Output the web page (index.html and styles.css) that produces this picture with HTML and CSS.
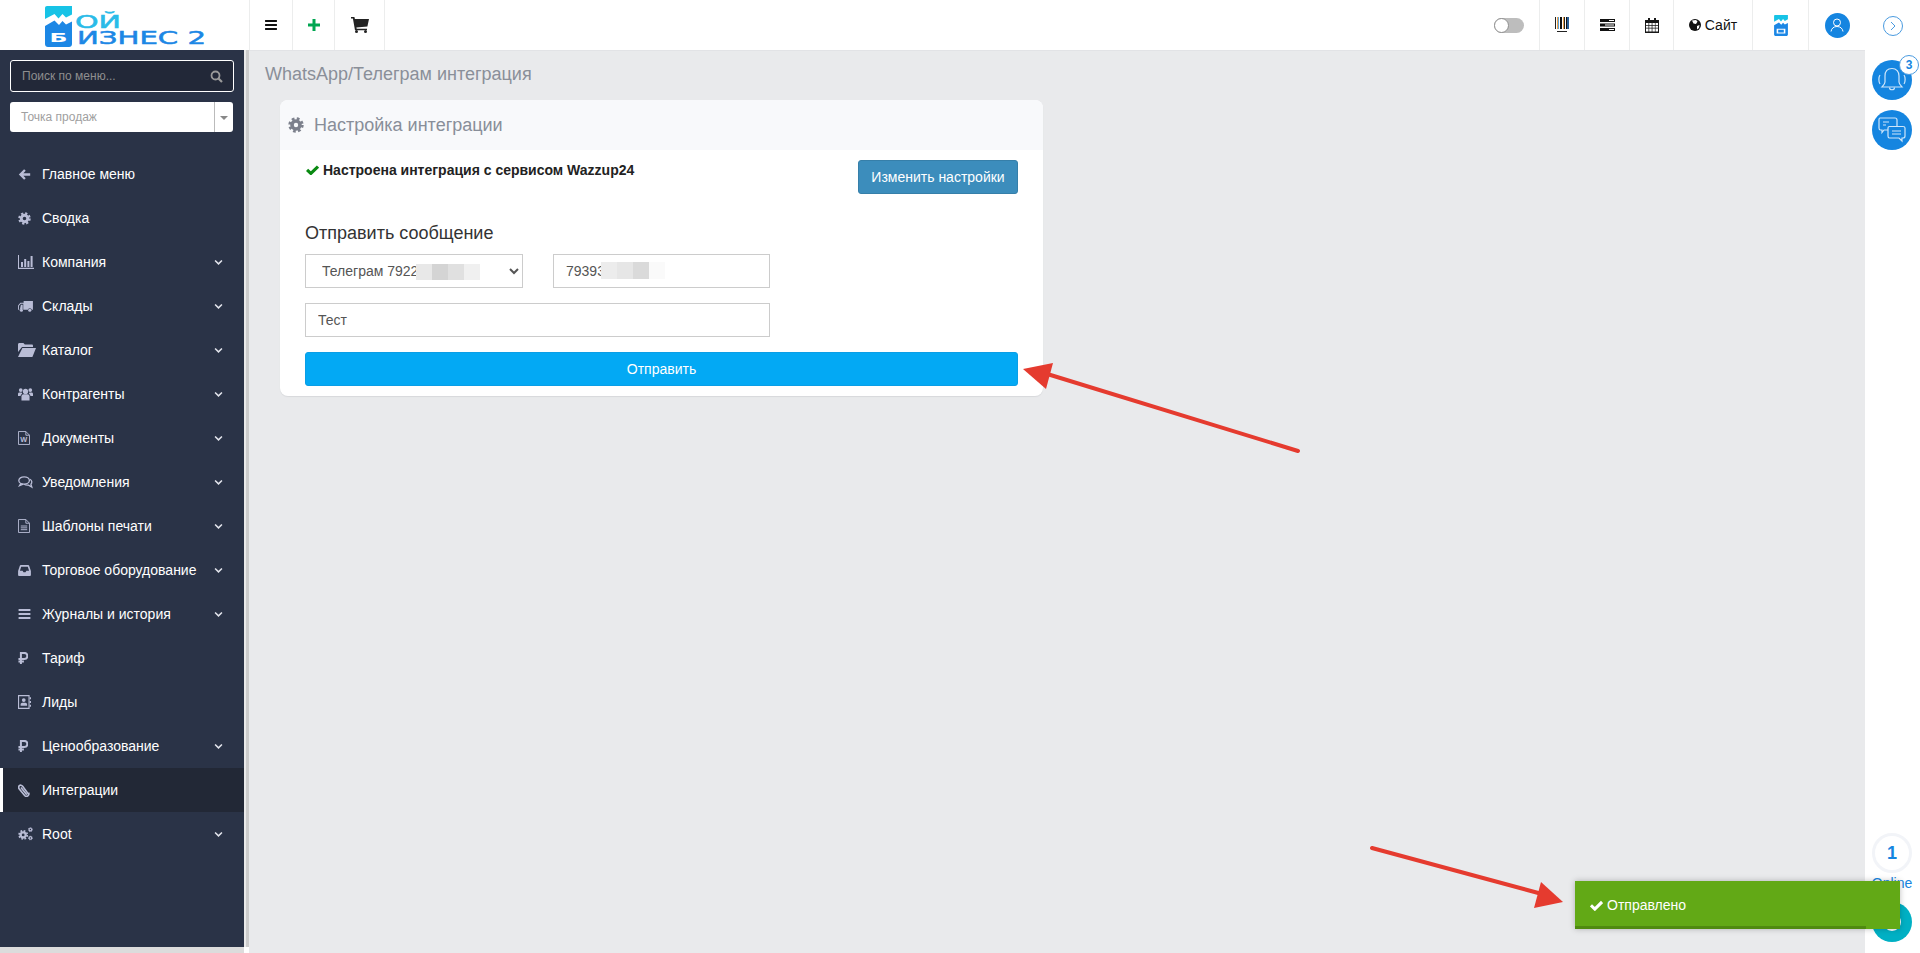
FILE: index.html
```html
<!DOCTYPE html>
<html lang="ru">
<head>
  <meta charset="UTF-8">
  <title>WhatsApp/Телеграм интеграция</title>
  <link rel="stylesheet" href="styles.css">
</head>
<body>
  <svg class="sprite" width="0" height="0">
    <symbol id="i-back" viewBox="0 0 16 16"><path d="M7.500 1.500 1 8l6.500 6.500 2-2L6.600 9.600H15V6.400H6.600l2.900-2.900z"/></symbol>
    <symbol id="i-cog" viewBox="0 0 16 16"><circle cx="8" cy="8" r="4" fill="none" stroke="currentColor" stroke-width="3.600"/><circle cx="8" cy="8" r="6.400" fill="none" stroke="currentColor" stroke-width="2.600" stroke-dasharray="2.700 2.330"/></symbol>
    <symbol id="i-chart" viewBox="0 0 16 14"><path d="M0 0h1v12.800h15V14H0z"/><path d="M3 7h2v5H3zM6.200 4h2v8h-2zM9.400 6h2v6h-2zM12.600 1h2v11h-2z"/></symbol>
    <symbol id="i-truck" viewBox="0 0 16 14"><path d="M6 1h10v9.500h-1.200a2.200 2.200 0 0 0-4.300 0H5.600V4H3L1 6.200V10h.6a2.200 2.200 0 0 0 0 .5H0V6l2.500-3H6z"/><circle cx="3.600" cy="11" r="1.700"/><circle cx="12.600" cy="11" r="1.700"/><path d="M2 10h3V5H3z"/></symbol>
    <symbol id="i-folder" viewBox="0 0 18 14"><path d="M0 1.500C0 .7.600 0 1.400 0h4l1.400 1.600h7c.7 0 1.200.5 1.200 1.200V4H4L0 9z"/><path d="M4.400 5H18l-3.600 9H0z"/></symbol>
    <symbol id="i-users" viewBox="0 0 16 14"><circle cx="8" cy="4.200" r="2.800"/><circle cx="2.900" cy="2.800" r="2"/><circle cx="13.100" cy="2.800" r="2"/><path d="M3.700 14V9.600C3.700 8 5 7.200 6 7.200h4c1 0 2.300.8 2.300 2.400V14z"/><path d="M0 9V7c0-.9.700-1.500 1.500-1.500h2.300l.7 1.100C3.400 7.100 2.800 8 2.800 9zM16 9V7c0-.9-.7-1.500-1.500-1.500h-2.300l-.7 1.100c1.100.5 1.700 1.400 1.700 2.400z"/></symbol>
    <symbol id="i-page" viewBox="0 0 13 15"><path d="M.5.500h8l4 4v10H.5z" fill="none" stroke="currentColor"/><path d="M8.500.500v4h4" fill="none" stroke="currentColor"/></symbol>
    <symbol id="i-comments" viewBox="0 0 16 14"><ellipse cx="6.500" cy="4.800" rx="5.700" ry="3.900" fill="none" stroke="currentColor" stroke-width="1.400"/><path d="M3 8l-1.400 2.400L5.500 8.800M12.800 3.500c2.300 1.300 2.600 3.700 1 5.300l1 3.200-3.600-2.200c-1.500.2-3.300 0-4.700-1" fill="none" stroke="currentColor" stroke-width="1.400"/></symbol>
    <symbol id="i-file" viewBox="0 0 13 15"><path d="M.5.500h8l4 4v10H.5z" fill="none" stroke="currentColor"/><path d="M8.500.500v4h4M3 7.500h7M3 9.500h7M3 11.500h7" fill="none" stroke="currentColor"/></symbol>
    <symbol id="i-inbox" viewBox="0 0 14 12"><path d="M3 0h8c.5 0 .9.300 1.100.7L14 6.500V11c0 .6-.4 1-1 1H1c-.6 0-1-.4-1-1V6.500L1.900.7C2.100.3 2.500 0 3 0zm.4 1.800L2 6.200h2.900l1 1.800h2.200l1-1.800H12l-1.400-4.400z"/></symbol>
    <symbol id="i-bars" viewBox="0 0 13 11"><path d="M0 0h13v2.200H0zM0 4.400h13v2.200H0zM0 8.800h13V11H0z"/></symbol>
    <symbol id="i-rub" viewBox="0 0 11 13"><path d="M3.200 13V.9h3.700a3.400 3.400 0 0 1 0 6.800H.5M.5 10.300h6" fill="none" stroke="currentColor" stroke-width="2.200"/></symbol>
    <symbol id="i-book" viewBox="0 0 14 15"><path d="M.6.600h11.300v13.800H.6z" fill="none" stroke="currentColor" stroke-width="1.200"/><circle cx="6.200" cy="5.400" r="2"/><path d="M2.800 11.500V10c0-1 .8-1.800 1.800-1.800H8c1 0 1.800.8 1.800 1.800v1.500zM12.500 2.500H14v2h-1.500zM12.500 6.500H14v2h-1.500zM12.500 10.500H14v2h-1.500z"/></symbol>
    <symbol id="i-clip" viewBox="0 0 13 14"><path d="M11.500 11.200 5 2.400C4 1 2.400 1 1.500 1.800S.4 4 1.400 5.400l5.800 7c.9 1 2.400 1.200 3.500.4s1.500-2.300.7-3.400" fill="none" stroke="currentColor" stroke-width="1.800"/><path d="M3.200 3.800l6.300 7.900" fill="none" stroke="currentColor" stroke-width="1.800"/></symbol>
    <symbol id="i-cogs" viewBox="0 0 16 15"><use href="#i-cog" x="0" y="3" width="11" height="11"/><use href="#i-cog" x="10.500" y="0" width="5.500" height="5.500"/><use href="#i-cog" x="10.500" y="9" width="5.500" height="5.500"/></symbol>
    <symbol id="i-chevron" viewBox="0 0 10 7"><path d="M1.200 1.200 5 5l3.800-3.800" fill="none" stroke="currentColor" stroke-width="1.700"/></symbol>
    <symbol id="i-check" viewBox="0 0 14 11"><path d="M1 5.300 5.200 9.300 13 1.700" fill="none" stroke="currentColor" stroke-width="3.400"/></symbol>
    <symbol id="i-mark" viewBox="0 0 27 41">
      <path d="M2 0h25v8.500l-6 3-3.500-3.500-4 4.500L9.500 8 0 13V2C0 .9.900 0 2 0z" fill="#17c3e6"/>
      <path d="M0 20l9.500-5.500 4.500 4.500 3.500-4 3.500 3.500 6-3V38c0 1.700-1.300 3-3 3H3c-1.700 0-3-1.300-3-3z" fill="#1c87e5"/>
    </symbol>
  </svg>

  <div class="page">
    <div class="workspace">
      <header class="topbar">
        <a class="logo">
          <svg class="logo-svg" width="170" height="49" viewBox="0 0 170 49">
            <use href="#i-mark" x="5" y="6" width="27" height="41"/>
            <text x="9.500" y="42" class="mark-letter" textLength="18" lengthAdjust="spacingAndGlyphs">Б</text>
            <text x="35" y="28" class="logo-top" textLength="46" lengthAdjust="spacingAndGlyphs">ОЙ</text>
            <text x="37" y="44" class="logo-bottom" textLength="129" lengthAdjust="spacingAndGlyphs">ИЗНЕС 2</text>
          </svg>
        </a>
        <div class="top-cell cell-menu">
          <svg class="top-bars" width="12" height="10"><use href="#i-bars"/></svg>
        </div>
        <div class="top-cell cell-plus">
          <svg class="top-plus" width="12" height="12" viewBox="0 0 12 12"><path d="M4.500 0h3v4.500H12v3H7.500V12h-3V7.500H0v-3h4.500z"/></svg>
        </div>
        <div class="top-cell cell-cart">
          <svg class="top-cart" width="18" height="16" viewBox="0 0 18 16"><path d="M0 0h3.400l.5 2H18l-1.600 7.400-11 1 .3 1.400H16v1.500H4L1.900 1.500H0z"/><circle cx="5.500" cy="14.500" r="1.500"/><circle cx="14.500" cy="14.500" r="1.500"/></svg>
        </div>
        <div class="top-spacer"></div>
        <div class="toggle-cell"><span class="toggle"><span class="toggle-knob"></span></span></div>
        <div class="top-cell cell-code">
          <svg width="16" height="16" viewBox="0 0 16 16">
            <path d="M1 0h1v12H1z" fill="#222"/><path d="M3 0h1v12H3z" fill="#e8a04a"/><path d="M4 0h1v12H4z" fill="#5ba3dc"/><path d="M6 0h2v12H6z" fill="#111"/><path d="M9 0h1v12H9z" fill="#e8a04a"/><path d="M10 0h1v12h-1z" fill="#222"/><path d="M12 0h1v12h-1z" fill="#111"/><path d="M13 0h2v12h-2z" fill="#2a5f96"/>
            <path d="M3 14h10v1H3z" fill="#222"/>
          </svg>
        </div>
        <div class="top-cell cell-rows">
          <svg width="15" height="12" viewBox="0 0 15 12"><path d="M0 0h15v3H0zM0 4.500h15v3H0zM0 9h15v3H0z" fill="#111"/><path d="M9 1h5v1H9zM5 5.500h9v1H5zM9 10h5v1H9z" fill="#fff"/></svg>
        </div>
        <div class="top-cell cell-date">
          <svg width="14" height="15" viewBox="0 0 14 15"><path d="M0 2h3V0h2v2h4V0h2v2h3v13H0z" fill="#181818"/><path d="M1 5h2.500v2H1zM4.200 5h2.500v2H4.200zM7.400 5h2.500v2H7.400zM10.500 5H13v2h-2.500zM1 7.800h2.500v2H1zM4.200 7.800h2.500v2H4.200zM7.400 7.800h2.500v2H7.400zM10.500 7.800H13v2h-2.500zM1 10.600h2.500v3H1zM4.200 10.600h2.500v3H4.200zM7.400 10.600h2.500v3H7.400zM10.500 10.600H13v3h-2.500z" fill="#fff"/></svg>
        </div>
        <div class="top-cell cell-site">
          <svg width="12" height="12" viewBox="0 0 12 12"><circle cx="6" cy="6" r="6" fill="#111"/><path d="M3 1.500 7 1l1.500 1.500L7 5 4.500 4.500zM8 7l2.500-1L10 9l-2 1.500z" fill="#fff"/></svg>
          <span>Сайт</span>
        </div>
        <div class="top-cell cell-mark">
          <svg width="14" height="21" viewBox="0 0 27 41">
            <use href="#i-mark" width="27" height="41"/>
            <path d="M5 27h17v9H5zM8 29v5h11v-5z" fill="#fff"/>
          </svg>
        </div>
        <div class="top-cell cell-user">
          <span class="user-badge">
            <svg width="14" height="14" viewBox="0 0 14 14"><circle cx="7" cy="4.500" r="3.500" fill="none" stroke="#fff"/><path d="M1 13.500c.5-3 2.500-5 6-5s5.500 2 6 5" fill="none" stroke="#fff"/></svg>
          </span>
        </div>
      </header>

      <div class="below">
        <aside class="sidebar">
          <div class="side-tools">
            <label class="side-search">
              <input type="text" placeholder="Поиск по меню...">
              <svg width="13" height="13" viewBox="0 0 13 13"><circle cx="5.500" cy="5.500" r="4" fill="none" stroke="currentColor" stroke-width="1.800"/><path d="m8.500 8.500 3.500 3.500" stroke="currentColor" stroke-width="2.200"/></svg>
            </label>
            <div class="side-select">
              <span class="side-select-text">Точка продаж</span>
              <span class="side-select-arrow"></span>
            </div>
          </div>

          <nav class="menu">
            <a class="menu-item"><svg class="menu-icon" width="13" height="13"><use href="#i-back"/></svg><span class="menu-text">Главное меню</span></a>
            <a class="menu-item"><svg class="menu-icon" width="13" height="13"><use href="#i-cog"/></svg><span class="menu-text">Сводка</span></a>
            <a class="menu-item"><svg class="menu-icon" width="16" height="14"><use href="#i-chart"/></svg><span class="menu-text">Компания</span><svg class="menu-chevron"><use href="#i-chevron"/></svg></a>
            <a class="menu-item"><svg class="menu-icon" width="15" height="13"><use href="#i-truck"/></svg><span class="menu-text">Склады</span><svg class="menu-chevron"><use href="#i-chevron"/></svg></a>
            <a class="menu-item"><svg class="menu-icon" width="18" height="14"><use href="#i-folder"/></svg><span class="menu-text">Каталог</span><svg class="menu-chevron"><use href="#i-chevron"/></svg></a>
            <a class="menu-item"><svg class="menu-icon" width="15" height="14"><use href="#i-users"/></svg><span class="menu-text">Контрагенты</span><svg class="menu-chevron"><use href="#i-chevron"/></svg></a>
            <a class="menu-item"><svg class="menu-icon" width="12" height="14" viewBox="0 0 13 15"><use href="#i-page" width="13" height="15"/><text x="6.300" y="12.300" class="icon-text" text-anchor="middle">W</text></svg><span class="menu-text">Документы</span><svg class="menu-chevron"><use href="#i-chevron"/></svg></a>
            <a class="menu-item"><svg class="menu-icon" width="15" height="13"><use href="#i-comments"/></svg><span class="menu-text">Уведомления</span><svg class="menu-chevron"><use href="#i-chevron"/></svg></a>
            <a class="menu-item"><svg class="menu-icon" width="12" height="14"><use href="#i-file"/></svg><span class="menu-text">Шаблоны печати</span><svg class="menu-chevron"><use href="#i-chevron"/></svg></a>
            <a class="menu-item"><svg class="menu-icon" width="13" height="11"><use href="#i-inbox"/></svg><span class="menu-text">Торговое оборудование</span><svg class="menu-chevron"><use href="#i-chevron"/></svg></a>
            <a class="menu-item"><svg class="menu-icon" width="13" height="10"><use href="#i-bars"/></svg><span class="menu-text">Журналы и история</span><svg class="menu-chevron"><use href="#i-chevron"/></svg></a>
            <a class="menu-item"><svg class="menu-icon" width="10" height="12"><use href="#i-rub"/></svg><span class="menu-text">Тариф</span></a>
            <a class="menu-item"><svg class="menu-icon" width="13" height="14"><use href="#i-book"/></svg><span class="menu-text">Лиды</span></a>
            <a class="menu-item"><svg class="menu-icon" width="10" height="12"><use href="#i-rub"/></svg><span class="menu-text">Ценообразование</span><svg class="menu-chevron"><use href="#i-chevron"/></svg></a>
            <a class="menu-item active"><svg class="menu-icon" width="12" height="13"><use href="#i-clip"/></svg><span class="menu-text">Интеграции</span></a>
            <a class="menu-item"><svg class="menu-icon" width="15" height="14"><use href="#i-cogs"/></svg><span class="menu-text">Root</span><svg class="menu-chevron"><use href="#i-chevron"/></svg></a>
          </nav>
        </aside>
        <div class="splitter"></div>

        <main class="content">
          <h1 class="page-title">WhatsApp/Телеграм интеграция</h1>
          <section class="card">
            <div class="card-head">
              <svg class="card-head-icon"><use href="#i-cog"/></svg>
              <h2>Настройка интеграции</h2>
            </div>
            <div class="card-body">
              <div class="status-row">
                <div class="status">
                  <svg class="status-check"><use href="#i-check"/></svg>
                  <b>Настроена интеграция с сервисом Wazzup24</b>
                </div>
                <button class="btn-settings">Изменить настройки</button>
              </div>
              <h3 class="send-title">Отправить сообщение</h3>
              <div class="send-row">
                <div class="field field-from">
                  <select class="control">
                    <option>Телеграм 7922</option>
                  </select>
                  <span class="blur blur-from"></span>
                </div>
                <div class="field field-to">
                  <input class="control" type="text" value="79393">
                  <span class="blur blur-to"></span>
                </div>
              </div>
              <input class="control control-text" type="text" value="Тест">
              <button class="btn-send">Отправить</button>
            </div>
          </section>
        </main>
      </div>
    </div>

    <aside class="rail">
      <div class="rail-top">
        <span class="rail-toggle">
          <svg width="6" height="10" viewBox="0 0 6 10"><path d="m1 1 4 4-4 4" fill="none" stroke="#4a9be0"/></svg>
        </span>
      </div>
      <span class="rail-btn rail-bell">
        <svg width="30" height="30" viewBox="0 0 30 30" fill="none" stroke="#cfe6fa" stroke-width="1.200">
          <path d="M15 3.500c-4.500 0-7 3-7 7.500v6c0 2-1.500 3.500-3 5h20c-1.500-1.500-3-3-3-5v-6c0-4.500-2.500-7.500-7-7.500z"/>
          <path d="M12.500 22.500c0 3 5 3 5 0M3 10c-1.500 2-1.500 7 0 9M27 10c1.500 2 1.500 7 0 9"/>
        </svg>
        <span class="rail-count">3</span>
      </span>
      <span class="rail-btn rail-chat">
        <svg width="28" height="26" viewBox="0 0 28 26" fill="none" stroke="#cfe6fa" stroke-width="1.200">
          <path d="M2 1h15c1 0 2 1 2 2v8c0 1-1 2-2 2H6l-2 2.500V13H2.500C1.500 13 1 12 1 11V3c0-1 .5-2 1-2z"/>
          <path d="M10 13.500V11c0-1 .5-1.500 1.500-1.500H25c1 0 2 .5 2 1.500v8c0 1-1 2-2 2h-1v3l-3-3H11.500c-1 0-1.500-1-1.500-2z" fill="#1585e0"/>
          <path d="M5 5h6M5 8h3M14 14h9M14 17h9"/>
        </svg>
      </span>
      <div class="rail-bottom">
        <span class="online-count">1</span>
        <span class="online-label">Online</span>
        <span class="rail-btn rail-help">
          <svg width="18" height="18" viewBox="0 0 18 18"><circle cx="9" cy="9" r="9" fill="#fff"/><circle cx="9" cy="9" r="4" fill="#00b0c4"/></svg>
        </span>
      </div>
    </aside>
  </div>

  <div class="toast">
    <svg class="toast-check"><use href="#i-check"/></svg>
    <span>Отправлено</span>
    <span class="toast-progress"></span>
  </div>

  <svg class="arrows" width="1920" height="953" viewBox="0 0 1920 953">
    <path d="M1298 451 1044 373" stroke="#e53b2f" stroke-width="4" stroke-linecap="round" fill="none"/>
    <path d="M1023 369 1053 363 1046 389z" fill="#e53b2f"/>
    <path d="M1372 848 1542 894" stroke="#e53b2f" stroke-width="4" stroke-linecap="round" fill="none"/>
    <path d="M1563 902 1541 882 1534 908z" fill="#e53b2f"/>
  </svg>
</body>
</html>
```

FILE: styles.css
```css
* {
  box-sizing: border-box;
}
html, body {
  height: 100%;
}
body {
  margin: 0;
  overflow: hidden;
  font-family: "Liberation Sans", Arial, sans-serif;
  font-size: 14px;
  color: #333;
  background: #e9eaec;
}
.sprite {
  position: absolute;
}
.icon-text {
  font: bold 8px "Liberation Sans", sans-serif;
  fill: currentColor;
}
.mark-letter {
  font: bold 12px "DejaVu Sans", sans-serif;
  fill: #fff;
}

.page {
  display: flex;
  height: 953px;
}
.workspace {
  flex: 1;
  min-width: 0;
  display: flex;
  flex-direction: column;
}

/* top bar */
.topbar {
  height: 50px;
  flex: none;
  display: flex;
  background: #fff;
}
.logo {
  width: 250px;
  padding-left: 40px;
  border-right: 1px solid #eceded;
}
.logo-svg {
  display: block;
}
.logo-top {
  font: 18px "DejaVu Sans", sans-serif;
  fill: #2abbe8;
  stroke: #2abbe8;
  stroke-width: .5;
}
.logo-bottom {
  font: 18px "DejaVu Sans", sans-serif;
  fill: #1c87e5;
  stroke: #1c87e5;
  stroke-width: .5;
}
.top-cell {
  display: flex;
  align-items: center;
  justify-content: center;
  border-right: 1px solid #eceded;
}
.cell-menu { width: 43px; }
.cell-plus { width: 42px; }
.cell-cart { width: 50px; }
.cell-code { width: 45px; }
.cell-rows { width: 45px; }
.cell-date { width: 44px; }
.cell-site { width: 79px; gap: 4px; color: #111; }
.cell-mark { width: 56px; }
.cell-user { width: 56px; border-right: 0; }
.top-bars { fill: #111; }
.top-plus { fill: #00a651; }
.top-cart { fill: #222; }
.top-spacer {
  flex: 1;
}
.toggle-cell {
  display: flex;
  align-items: center;
  padding-right: 15px;
  border-right: 1px solid #eceded;
}
.toggle {
  display: block;
  width: 30px;
  height: 15px;
  padding: 0;
  border-radius: 8px;
  background: #bdbdbd;
}
.toggle-knob {
  display: block;
  width: 15px;
  height: 15px;
  border-radius: 50%;
  background: #fff;
  border: 1px solid #8e8e8e;
}
.user-badge {
  width: 25px;
  height: 25px;
  border-radius: 50%;
  background: #1585e0;
  display: flex;
  align-items: center;
  justify-content: center;
}

/* sidebar */
.below {
  flex: 1;
  min-height: 0;
  display: flex;
  background: #fff;
}
.sidebar {
  width: 244px;
  flex: none;
  height: 897px;
  background: #2a3347;
  color: #fff;
  box-shadow: 0 6px 0 #dcdcdc;
}
.splitter {
  width: 5px;
  height: 897px;
  flex: none;
  background: linear-gradient(to right, #eaeaea 2px, #cccccc 2px);
}
.side-tools {
  padding: 10px 10px 0;
}
.side-search {
  display: flex;
  align-items: center;
  height: 32px;
  padding: 0 10px 0 11px;
  background: #222838;
  border: 1px solid #fff;
  border-radius: 3px;
  color: #9a9a9a;
}
.side-search input {
  flex: 1;
  min-width: 0;
  padding: 0;
  border: 0;
  outline: 0;
  background: none;
  font: 12px "Liberation Sans", Arial, sans-serif;
  color: #ccc;
}
.side-search input::placeholder {
  color: #8f8f8f;
  opacity: 1;
}
.side-select {
  display: flex;
  align-items: center;
  height: 30px;
  width: 223px;
  margin-top: 10px;
  background: #fff;
  border-radius: 3px;
  color: #a0a0a0;
  font-size: 12px;
}
.side-select-text {
  flex: 1;
  padding-left: 11px;
}
.side-select-arrow {
  position: relative;
  width: 19px;
  height: 100%;
  border-left: 1px solid #bbb;
}
.side-select-arrow::after {
  content: "";
  position: absolute;
  left: 5px;
  top: 14px;
  border: 4px solid transparent;
  border-top: 4px solid #888;
}
.menu {
  margin-top: 20px;
}
.menu-item {
  height: 44px;
  display: grid;
  grid-template-columns: 24px 1fr auto;
  align-items: center;
  padding: 0 21px 0 18px;
  border-left: 0 solid #fff;
}
.menu-item.active {
  background: #222836;
  border-left-width: 3px;
  padding-left: 15px;
}
.menu-icon {
  fill: currentColor;
  color: #b9bdd6;
}
.menu-text {
  white-space: nowrap;
}
.menu-chevron {
  width: 9px;
  height: 7px;
  color: #e4e6ee;
}

/* content */
.content {
  flex: 1;
  min-width: 0;
  padding: 12px 0 0 16px;
  background: #e9eaec;
  border-top: 1px solid #e2e3e6;
}
.page-title {
  margin: 0 0 15px;
  font-size: 18px;
  font-weight: 400;
  line-height: 22px;
  color: #8a8f99;
}
.card {
  width: 763px;
  margin-left: 15px;
  background: #fff;
  border-radius: 8px;
  box-shadow: 0 1px 1px #d8d9dc;
}
.card-head {
  height: 50px;
  display: flex;
  align-items: center;
  padding-left: 8px;
  background: #f8f9fb;
  border-radius: 8px 8px 0 0;
}
.card-head-icon {
  width: 16px;
  height: 16px;
  color: #7c808c;
}
.card-head h2 {
  margin: 0 0 0 10px;
  font-size: 18px;
  font-weight: 400;
  color: #888e99;
}
.card-body {
  padding: 10px 25px;
}
.status-row {
  display: flex;
  justify-content: space-between;
  align-items: flex-start;
}
.status {
  display: flex;
  align-items: center;
  gap: 4px;
  line-height: 20px;
  color: #222;
  font-size: 14px;
}
.status-check {
  width: 13px;
  height: 10px;
  margin-left: 1px;
  color: #0a8a12;
}
.btn-settings {
  width: 160px;
  height: 34px;
  padding: 0;
  background: #3c8dbc;
  border: 1px solid #367fa9;
  border-radius: 3px;
  color: #fff;
  font: 14px "Liberation Sans", Arial, sans-serif;
}
.send-title {
  margin: 29px 0 11px;
  font-size: 18px;
  font-weight: 400;
  line-height: 20px;
  color: #333;
}
.send-row {
  display: flex;
  gap: 30px;
}
.field {
  position: relative;
}
.field-from { width: 218px; }
.field-to { width: 217px; }
.control {
  display: block;
  width: 100%;
  height: 34px;
  padding: 0 12px;
  border: 1px solid #ccc;
  border-radius: 0;
  outline: 0;
  background: #fff;
  color: #555;
  font: 14px "Liberation Sans", Arial, sans-serif;
}
.control-text {
  width: 465px;
  margin-top: 15px;
}
.blur {
  position: absolute;
  width: 64px;
}
.blur-from {
  left: 111px;
  top: 10px;
  height: 16px;
  background: linear-gradient(to right, #e8e8e8 25%, #d4d4d4 25% 50%, #e0e0e0 50% 75%, #f0f0f0 75%);
}
.blur-to {
  left: 48px;
  top: 8px;
  height: 17px;
  background: linear-gradient(to right, #ececec 25%, #e6e6e6 25% 50%, #dadada 50% 75%, #fafafa 75%);
}
.btn-send {
  display: block;
  width: 713px;
  height: 34px;
  margin-top: 15px;
  padding: 0;
  background: #03a9f4;
  border: 1px solid #0a9ee6;
  border-radius: 3px;
  color: #fff;
  font: 14px "Liberation Sans", Arial, sans-serif;
}

/* right rail */
.rail {
  width: 55px;
  flex: none;
  display: flex;
  flex-direction: column;
  align-items: center;
  background: #fff;
  padding: 0 1px 11px 0;
}
.rail-top {
  height: 60px;
  padding: 16px 0 0 2px;
}
.rail-toggle {
  display: flex;
  align-items: center;
  justify-content: center;
  width: 20px;
  height: 20px;
  border: 1px solid #4a9be0;
  border-radius: 50%;
}
.rail-btn {
  position: relative;
  display: flex;
  align-items: center;
  justify-content: center;
  width: 40px;
  height: 40px;
  border-radius: 50%;
  background: #1585e0;
}
.rail-chat {
  margin-top: 10px;
}
.rail-count {
  position: absolute;
  right: -7px;
  top: -5px;
  width: 20px;
  height: 20px;
  border: 1px solid #4a9be0;
  border-radius: 50%;
  background: #fff;
  color: #1585e0;
  font-size: 12px;
  font-weight: 700;
  line-height: 18px;
  text-align: center;
}
.rail-bottom {
  margin-top: auto;
  display: flex;
  flex-direction: column;
  align-items: center;
}
.online-count {
  width: 40px;
  height: 40px;
  border: 3px solid #f2f4f8;
  border-radius: 50%;
  color: #1585e0;
  font-size: 18px;
  font-weight: 700;
  line-height: 34px;
  text-align: center;
}
.online-label {
  margin-top: 1px;
  line-height: 18px;
  color: #1585e0;
}
.rail-help {
  margin-top: 10px;
  background: #00b0c4;
}

/* notification */
.toast {
  position: absolute;
  left: 1575px;
  top: 881px;
  width: 325px;
  height: 48px;
  display: flex;
  align-items: center;
  gap: 4px;
  padding-left: 15px;
  background: #62a916;
  color: #fff;
  box-shadow: 0 0 6px rgba(0, 0, 0, .25);
}
.toast-check {
  width: 13px;
  height: 11px;
}
.toast-progress {
  position: absolute;
  left: 0;
  bottom: 0;
  width: 291px;
  height: 3px;
  background: #4f8a10;
}
.arrows {
  position: absolute;
  left: 0;
  top: 0;
  pointer-events: none;
}
```
